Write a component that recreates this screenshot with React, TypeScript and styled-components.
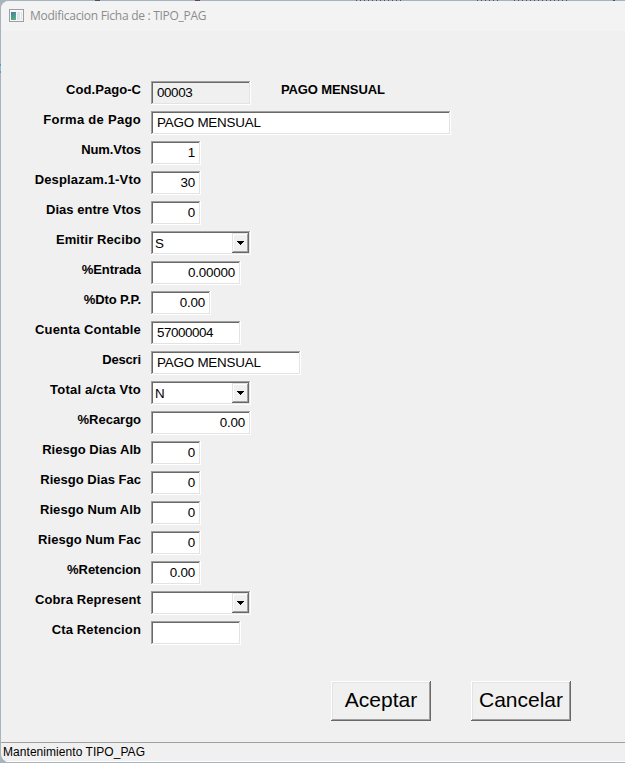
import React from 'react';
import styled, { createGlobalStyle } from 'styled-components';

const GlobalStyle = createGlobalStyle`
  * { box-sizing: border-box; }
  html, body { margin: 0; padding: 0; overflow: hidden; background: #a5b4bd; }
  body { font-family: "Liberation Sans", Arial, sans-serif; color: #000; }
`;

const Backdrop = styled.div`
  width: 625px;
  height: 763px;
  padding: 1px 0 0 1px;
  background:
    repeating-linear-gradient(90deg, #554a5c 0 1px, transparent 1px 4px) 356px 0 / 45px 1px no-repeat,
    repeating-linear-gradient(90deg, #554a5c 0 1px, transparent 1px 4px) 477px 0 / 24px 1px no-repeat,
    repeating-linear-gradient(90deg, #554a5c 0 1px, transparent 1px 4px) 514px 0 / 56px 1px no-repeat,
    linear-gradient(#554a5c, #554a5c) 95px 0 / 5px 1px no-repeat,
    linear-gradient(#554a5c, #554a5c) 195px 0 / 5px 1px no-repeat,
    linear-gradient(#554a5c, #554a5c) 613px 0 / 2px 1px no-repeat,
    linear-gradient(#4e9ccb, #4e9ccb) 0 64px / 1px 2px no-repeat,
    linear-gradient(#4e9ccb, #4e9ccb) 0 71px / 1px 2px no-repeat,
    #a5b4bd;
`;

const Window = styled.div`
  width: 624px;
  height: 761px;
  display: flex;
  flex-direction: column;
  background: #f0f0f0;
  border-radius: 8px 0 0 8px;
  overflow: hidden;
`;

const TitleBar = styled.header`
  height: 30px;
  flex: none;
  display: flex;
  align-items: center;
  gap: 6px;
  padding-left: 8px;
  background: #f3f3f3;
  color: #8c8c8c;
  font: 12px/30px "Open Sans", "Noto Sans", sans-serif;
  letter-spacing: -0.28px;
  white-space: nowrap;

  svg { margin-top: -2px; }
`;

const Form = styled.main`
  flex: 1;
  display: flex;
  flex-direction: column;
  padding-top: 50px;
`;

const Row = styled.div`
  height: 30px;
  flex: none;
  display: flex;
  align-items: flex-start;
`;

const Label = styled.label<{ $spacing?: number }>`
  width: 140px;
  margin-right: 10px;
  padding-top: 1px;
  text-align: right;
  font-size: 13px;
  font-weight: bold;
  line-height: 16px;
  white-space: nowrap;
  letter-spacing: ${p => p.$spacing ?? 0.05}px;
`;

const Field = styled.div<{ $width: number; $right?: boolean; $disabled?: boolean; $spacing?: number }>`
  width: ${p => p.$width}px;
  height: 24px;
  box-shadow:
    inset -1px -1px #fff,
    inset 1px 1px #a0a0a0,
    inset -2px -2px #e3e3e3,
    inset 2px 2px #696969;
  background: ${p => (p.$disabled ? '#f0f0f0' : '#fff')};
  padding: 1px 6px;
  font-size: 13.4px;
  line-height: 22px;
  letter-spacing: ${p => (p.$spacing ?? 0) - 0.2}px;
  text-align: ${p => (p.$right ? 'right' : 'left')};
  white-space: nowrap;
`;

const Select = styled(Field)`
  display: flex;
  justify-content: space-between;
  padding: 2px 2px 2px 4px;
  line-height: 21px;
`;

const DropButton = styled.span`
  width: 17px;
  height: 20px;
  display: flex;
  align-items: center;
  justify-content: center;
  background: #f0f0f0;
  box-shadow:
    inset -1px -1px #696969,
    inset 1px 1px #e3e3e3,
    inset -2px -2px #a0a0a0,
    inset 2px 2px #fff;
`;

const Description = styled.strong`
  margin-left: 30px;
  padding-top: 1px;
  font-size: 13px;
  line-height: 16px;
  letter-spacing: -0.12px;
`;

const Actions = styled.div`
  display: flex;
  gap: 40px;
  margin: 30px 0 0 330px;
`;

const Button = styled.button`
  width: 100px;
  height: 40px;
  padding: 0 0 2px;
  border: 0;
  box-shadow:
    inset -1px -1px #696969,
    inset 1px 1px #fff,
    inset -2px -2px #a0a0a0,
    inset 2px 2px #e3e3e3;
  background: #f0f0f0;
  color: #000;
  font: 21px "Liberation Sans", Arial, sans-serif;
  white-space: nowrap;
`;

const StatusBar = styled.footer`
  height: 20px;
  flex: none;
  border-top: 1px solid #a0a0a0;
  border-bottom: 1px solid #fff;
  padding-left: 2px;
  font-size: 12px;
  line-height: 19px;
  letter-spacing: 0.05px;
`;

const AppIcon = () => (
  <svg width="15" height="13" viewBox="0 0 15 13" shapeRendering="crispEdges">
    <defs>
      <linearGradient id="pane" x1="0" y1="0" x2="0.6" y2="1">
        <stop offset="0" stopColor="#4777a5" />
        <stop offset="1" stopColor="#58ae82" />
      </linearGradient>
    </defs>
    <rect x="0.5" y="0.5" width="14" height="12" fill="#f7f7f7" stroke="#9c9fa2" />
    <rect x="2" y="3" width="5" height="8" fill="url(#pane)" />
    <rect x="8" y="3" width="3" height="8" fill="#dce5e8" />
    <rect x="12" y="3" width="1" height="8" fill="#dde7e2" />
  </svg>
);

const Arrow = () => (
  <svg width="7" height="4" viewBox="0 0 7 4" shapeRendering="crispEdges">
    <path d="M0 0h7v1H0zM1 1h5v1H1zM2 2h3v1H2zM3 3h1v1H3z" />
  </svg>
);

interface Item {
  label: string;
  value: string;
  width: number;
  kind?: 'select' | 'number' | 'disabled';
  note?: string;
  labelSpacing?: number;
  valueSpacing?: number;
}

const items: Item[] = [
  { label: 'Cod.Pago-C', value: '00003', width: 100, kind: 'disabled', note: 'PAGO MENSUAL', valueSpacing: -0.2 },
  { label: 'Forma de Pago', value: 'PAGO MENSUAL', width: 300, labelSpacing: 0.3 },
  { label: 'Num.Vtos', value: '1', width: 50, kind: 'number', labelSpacing: -0.1 },
  { label: 'Desplazam.1-Vto', value: '30', width: 50, kind: 'number', labelSpacing: 0.15 },
  { label: 'Dias entre Vtos', value: '0', width: 50, kind: 'number', labelSpacing: 0.02 },
  { label: 'Emitir Recibo', value: 'S', width: 100, kind: 'select', labelSpacing: 0.1 },
  { label: '%Entrada', value: '0.00000', width: 90, kind: 'number', labelSpacing: -0.1 },
  { label: '%Dto P.P.', value: '0.00', width: 60, kind: 'number', labelSpacing: -0.08 },
  { label: 'Cuenta Contable', value: '57000004', width: 90, labelSpacing: 0.18, valueSpacing: -0.25 },
  { label: 'Descri', value: 'PAGO MENSUAL', width: 150, labelSpacing: -0.15 },
  { label: 'Total a/cta Vto', value: 'N', width: 100, kind: 'select', labelSpacing: 0.2 },
  { label: '%Recargo', value: '0.00', width: 100, kind: 'number', labelSpacing: -0.02 },
  { label: 'Riesgo Dias Alb', value: '0', width: 50, kind: 'number', labelSpacing: 0.02 },
  { label: 'Riesgo Dias Fac', value: '0', width: 50, kind: 'number', labelSpacing: 0.02 },
  { label: 'Riesgo Num Alb', value: '0', width: 50, kind: 'number', labelSpacing: 0.08 },
  { label: 'Riesgo Num Fac', value: '0', width: 50, kind: 'number', labelSpacing: 0.08 },
  { label: '%Retencion', value: '0.00', width: 50, kind: 'number', labelSpacing: -0.05 },
  { label: 'Cobra Represent', value: '', width: 100, kind: 'select', labelSpacing: 0.08 },
  { label: 'Cta Retencion', value: '', width: 90, labelSpacing: 0.15 },
];

export default function App() {
  return (
    <>
      <GlobalStyle />
      <Backdrop>
        <Window>
          <TitleBar>
            <AppIcon />
            <span>Modificacion Ficha de : TIPO_PAG</span>
          </TitleBar>
          <Form>
            {items.map(item => (
              <Row key={item.label}>
                <Label $spacing={item.labelSpacing}>{item.label}</Label>
                {item.kind === 'select' ? (
                  <Select $width={item.width}>
                    <span>{item.value}</span>
                    <DropButton><Arrow /></DropButton>
                  </Select>
                ) : (
                  <Field
                    $width={item.width}
                    $right={item.kind === 'number'}
                    $disabled={item.kind === 'disabled'}
                    $spacing={item.valueSpacing}
                  >
                    {item.value}
                  </Field>
                )}
                {item.note && <Description>{item.note}</Description>}
              </Row>
            ))}
            <Actions>
              <Button>Aceptar</Button>
              <Button>Cancelar</Button>
            </Actions>
          </Form>
          <StatusBar>Mantenimiento TIPO_PAG</StatusBar>
        </Window>
      </Backdrop>
    </>
  );
}
